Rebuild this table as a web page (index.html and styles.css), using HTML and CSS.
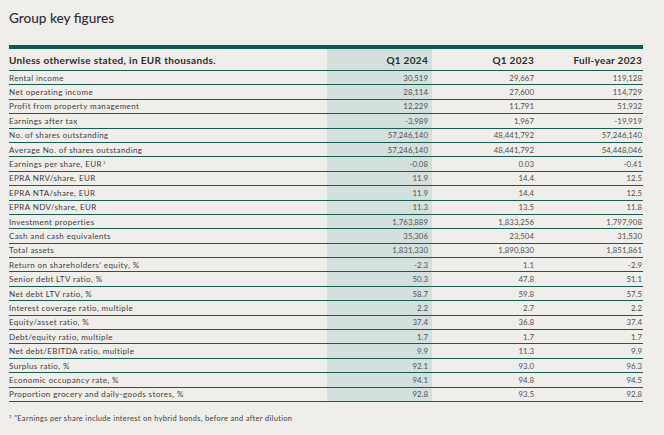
FILE: index.html
```html
<!DOCTYPE html>
<html lang="en">
<head>
<meta charset="utf-8">
<title>Group key figures</title>
<link rel="stylesheet" href="styles.css">
</head>
<body>
<div class="page">
  <h1 class="title">Group key figures</h1>
  <div class="table">
    <div class="row head">
      <div class="cell label">Unless otherwise stated, in EUR thousands.</div>
      <div class="cell num hl">Q1 2024</div>
      <div class="cell num c3">Q1 2023</div>
      <div class="cell num c4">Full-year 2023</div>
    </div>
    <div class="row"><div class="cell label">Rental income</div><div class="cell num hl">30,519</div><div class="cell num c3">29,667</div><div class="cell num c4">119,128</div></div>
    <div class="row"><div class="cell label">Net operating income</div><div class="cell num hl">28,114</div><div class="cell num c3">27,600</div><div class="cell num c4">114,729</div></div>
    <div class="row"><div class="cell label">Profit from property management</div><div class="cell num hl">12,229</div><div class="cell num c3">11,791</div><div class="cell num c4">51,932</div></div>
    <div class="row"><div class="cell label">Earnings after tax</div><div class="cell num hl">-3,989</div><div class="cell num c3">1,967</div><div class="cell num c4">-19,919</div></div>
    <div class="row"><div class="cell label">No. of shares outstanding</div><div class="cell num hl">57,246,140</div><div class="cell num c3">48,441,792</div><div class="cell num c4">57,246,140</div></div>
    <div class="row"><div class="cell label">Average No. of shares outstanding</div><div class="cell num hl">57,246,140</div><div class="cell num c3">48,441,792</div><div class="cell num c4">54,448,046</div></div>
    <div class="row"><div class="cell label">Earnings per share, EUR<sup class="sup">1</sup></div><div class="cell num hl">-0.08</div><div class="cell num c3">0.03</div><div class="cell num c4">-0.41</div></div>
    <div class="row"><div class="cell label">EPRA NRV/share, EUR</div><div class="cell num hl">11.9</div><div class="cell num c3">14.4</div><div class="cell num c4">12.5</div></div>
    <div class="row"><div class="cell label">EPRA NTA/share, EUR</div><div class="cell num hl">11.9</div><div class="cell num c3">14.4</div><div class="cell num c4">12.5</div></div>
    <div class="row"><div class="cell label">EPRA NDV/share, EUR</div><div class="cell num hl">11.3</div><div class="cell num c3">13.5</div><div class="cell num c4">11.8</div></div>
    <div class="row"><div class="cell label">Investment properties</div><div class="cell num hl">1,763,889</div><div class="cell num c3">1,833,256</div><div class="cell num c4">1,797,908</div></div>
    <div class="row"><div class="cell label">Cash and cash equivalents</div><div class="cell num hl">35,306</div><div class="cell num c3">23,504</div><div class="cell num c4">31,530</div></div>
    <div class="row"><div class="cell label">Total assets</div><div class="cell num hl">1,831,330</div><div class="cell num c3">1,890,830</div><div class="cell num c4">1,851,861</div></div>
    <div class="row"><div class="cell label">Return on shareholders’ equity, %</div><div class="cell num hl">-2.3</div><div class="cell num c3">1.1</div><div class="cell num c4">-2.9</div></div>
    <div class="row"><div class="cell label">Senior debt LTV ratio, %</div><div class="cell num hl">50.3</div><div class="cell num c3">47.8</div><div class="cell num c4">51.1</div></div>
    <div class="row"><div class="cell label">Net debt LTV ratio, %</div><div class="cell num hl">58.7</div><div class="cell num c3">59.8</div><div class="cell num c4">57.5</div></div>
    <div class="row"><div class="cell label">Interest coverage ratio, multiple</div><div class="cell num hl">2.2</div><div class="cell num c3">2.7</div><div class="cell num c4">2.2</div></div>
    <div class="row"><div class="cell label">Equity/asset ratio, %</div><div class="cell num hl">37.4</div><div class="cell num c3">36.8</div><div class="cell num c4">37.4</div></div>
    <div class="row"><div class="cell label">Debt/equity ratio, multiple</div><div class="cell num hl">1.7</div><div class="cell num c3">1.7</div><div class="cell num c4">1.7</div></div>
    <div class="row"><div class="cell label">Net debt/EBITDA ratio, multiple</div><div class="cell num hl">9.9</div><div class="cell num c3">11.3</div><div class="cell num c4">9.9</div></div>
    <div class="row"><div class="cell label">Surplus ratio, %</div><div class="cell num hl">92.1</div><div class="cell num c3">93.0</div><div class="cell num c4">96.3</div></div>
    <div class="row"><div class="cell label">Economic occupancy rate, %</div><div class="cell num hl">94.1</div><div class="cell num c3">94.8</div><div class="cell num c4">94.5</div></div>
    <div class="row"><div class="cell label">Proportion grocery and daily-goods stores, %</div><div class="cell num hl">92.8</div><div class="cell num c3">93.5</div><div class="cell num c4">92.8</div></div>
  </div>
  <p class="note"><span class="note-mark">1</span> "Earnings per share include interest on hybrid bonds, before and after dilution</p>
</div>
</body>
</html>
```

FILE: styles.css
```css
html, body {
  margin: 0;
  padding: 0;
  background: #f0eeea;
}
.page {
  width: 664px;
  height: 435px;
  padding: 0 21px 0 9px;
  box-sizing: border-box;
  font-family: Lato, "Liberation Sans", sans-serif;
  color: #3c3c3c;
}
.title {
  margin: 0;
  padding-top: 9px;
  height: 45px;
  box-sizing: border-box;
  font-size: 13.6px;
  line-height: 18px;
  font-weight: 500;
  color: #2e2e2e;
}
.table {
  width: 634px;
  border-top: 4px solid #0c5a50;
}
.row {
  display: grid;
  grid-template-columns: 318px 105px 107px 104px;
  height: 14.4px;
  box-sizing: border-box;
  border-bottom: 1px solid #1a5b52;
  font-size: 8px;
  align-items: center;
}
.row.head {
  height: 22px;
  font-size: 10px;
  font-weight: 700;
  color: #2a2a2a;
  border-bottom-width: 1.2px;
}
.cell {
  height: 100%;
  display: flex;
  align-items: center;
  white-space: nowrap;
}
.label {
  letter-spacing: 0.4px;
}
.head .label {
  letter-spacing: 0.35px;
}
.num {
  justify-content: flex-end;
  color: #505050;
  font-size: 7.8px;
  letter-spacing: 0.05px;
}
.head .num {
  color: #2a2a2a;
  font-size: 10px;
  letter-spacing: 0.3px;
}
.hl {
  background: #d3e0de;
  padding-right: 4px;
}
.c3 {
  padding-right: 5px;
}
.c4 {
  padding-right: 1px;
}
.sup {
  font-size: 4.5px;
  align-self: flex-start;
  margin-top: 3px;
  margin-left: 1px;
}
.note {
  margin: 12px 0 0;
  font-size: 7.4px;
  letter-spacing: 0.35px;
  color: #3c3c3c;
}
.note-mark {
  font-size: 4.5px;
  vertical-align: 3px;
}
```
